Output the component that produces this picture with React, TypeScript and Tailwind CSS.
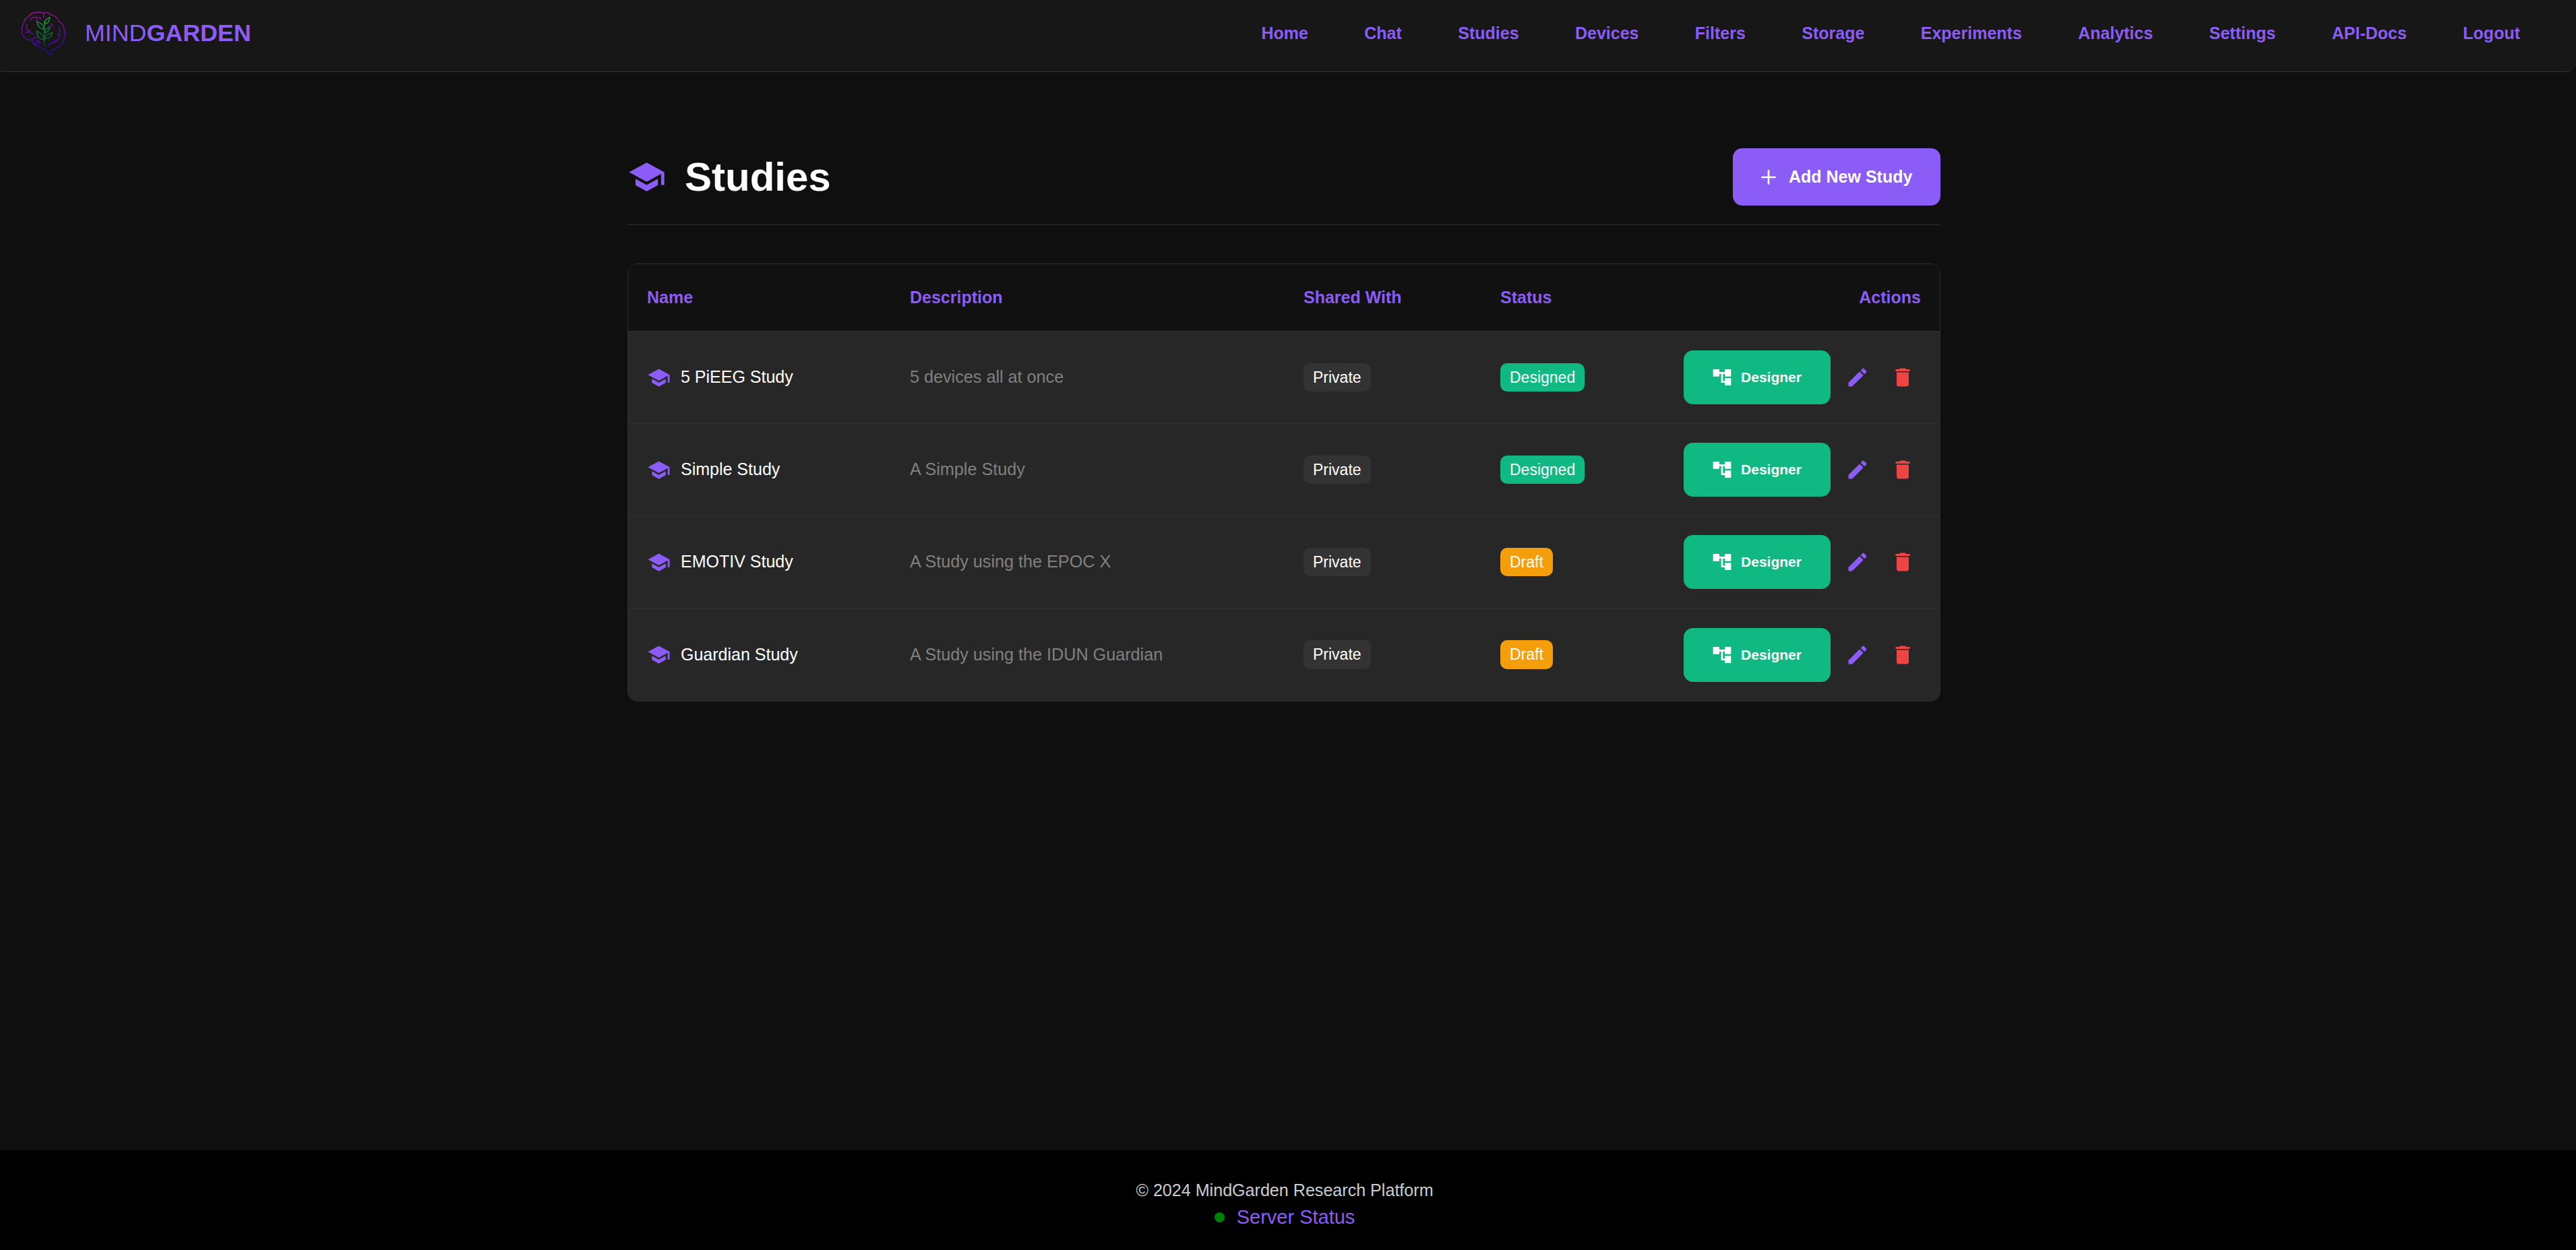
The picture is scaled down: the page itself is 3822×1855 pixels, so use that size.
const F = "font-['Liberation_Sans',Arial,sans-serif]";

const Cap = ({ className }: { className: string }) => (
  <svg viewBox="0 0 24 24" fill="currentColor" className={className}>
    <path d="M5 13.18v4L12 21l7-3.82v-4L12 17l-7-3.82zM12 3 1 9l11 6 9-4.91V17h2V9L12 3z" />
  </svg>
);

const Pencil = () => (
  <svg viewBox="0 0 24 24" fill="currentColor" className="w-[36px] h-[36px] text-[#8b5cf6]">
    <path d="M3 17.25V21h3.75L17.81 9.94l-3.75-3.75L3 17.25zM20.71 7.04a.996.996 0 0 0 0-1.41l-2.34-2.34a.996.996 0 0 0-1.41 0l-1.83 1.83 3.75 3.75 1.83-1.83z" />
  </svg>
);

const Trash = () => (
  <svg viewBox="0 0 24 24" fill="currentColor" className="w-[36px] h-[36px] text-[#ef4444]">
    <path d="M6 19c0 1.1.9 2 2 2h8c1.1 0 2-.9 2-2V7H6v12zM19 4h-3.5l-1-1h-5l-1 1H5v2h14V4z" />
  </svg>
);

const Tree = () => (
  <svg viewBox="0 0 24 24" fill="currentColor" className="w-[32px] h-[32px] text-white">
    <path d="M22 11V3h-7v3H9V3H2v8h7V8h2v10h4v3h7v-8h-7v3h-2V8h2v3z" />
  </svg>
);

const Logo = () => (
  <svg viewBox="60 30 205 210" fill="none" className="w-[68px] h-[70px] shrink-0">
    <defs>
      <linearGradient id="br" gradientUnits="userSpaceOnUse" x1="160" y1="40" x2="160" y2="232">
        <stop offset="0" stopColor="#a3109a" />
        <stop offset="1" stopColor="#2506b8" />
      </linearGradient>
      <linearGradient id="lf" gradientUnits="userSpaceOnUse" x1="170" y1="62" x2="170" y2="190">
        <stop offset="0" stopColor="#10b030" />
        <stop offset="1" stopColor="#064a38" />
      </linearGradient>
    </defs>
    <g stroke="url(#br)" strokeWidth="4" strokeLinecap="round" strokeLinejoin="round">
      <path d="M165 44C155 38 140 38 130 41C118 40 104 46 100 56C86 62 78 72 76 88C68 98 66 114 69 126C66 136 72 148 84 154C90 162 102 164 114 164C114 178 124 188 140 190C150 198 160 202 168 204L196 232L203 206C216 206 230 198 238 186C250 180 258 166 256 152C264 140 262 122 254 110C254 96 244 84 232 80C228 66 214 52 198 50C188 40 174 38 165 44Z" />
      <path d="M165 44V62" />
      <path d="M105 76C108 64 122 58 134 64C142 60 150 64 152 70" />
      <path d="M135 72C132 78 134 84 138 88" />
      <path d="M92 95C84 104 86 118 106 132" />
      <path d="M84 130C92 130 100 126 106 120M106 132L118 136" />
      <path d="M114 164C118 152 132 148 142 152M128 168C136 164 146 168 150 176M122 182C130 178 140 176 146 178" />
      <path d="M234 110C240 120 240 130 226 144M240 140C238 152 232 162 218 166M218 166C212 174 196 176 184 190M206 176L226 168" />
      <path d="M196 90L198 92M192 100C198 102 202 100 206 96" />
    </g>
    <g stroke="url(#lf)" strokeWidth="4" strokeLinejoin="round">
      <path d="M168 190V78" />
      <path d="M166 116C164 96 152 86 136 82C136 100 148 114 166 116Z" />
      <path d="M168 92C168 76 178 68 192 62C192 78 184 90 168 92Z" />
      <path d="M170 130C172 116 180 108 192 106C190 120 184 128 170 130Z" />
      <path d="M166 162C164 142 150 128 134 124C134 146 146 160 166 162Z" />
      <path d="M170 158C172 142 186 134 204 130C200 148 188 158 170 158Z" />
    </g>
  </svg>
);

const nav = ["Home", "Chat", "Studies", "Devices", "Filters", "Storage", "Experiments", "Analytics", "Settings", "API-Docs", "Logout"];

const rows = [
  { name: "5 PiEEG Study", desc: "5 devices all at once", status: "Designed" },
  { name: "Simple Study", desc: "A Simple Study", status: "Designed" },
  { name: "EMOTIV Study", desc: "A Study using the EPOC X", status: "Draft" },
  { name: "Guardian Study", desc: "A Study using the IDUN Guardian", status: "Draft" },
];

const grid = "grid grid-cols-[390px_584px_292px_1fr] items-center";

export default function App() {
  return (
    <div className={`${F} min-h-[1855px] flex flex-col bg-[#0f0f0f] text-white`}>
      <header className="h-[107px] shrink-0 flex items-center justify-between bg-[#171717] border-b border-[#333333] rounded-bl-[4px] rounded-br-[15px] pl-[30px] pr-[83px] pb-[7px]">
        <div className="flex items-center gap-[28px]">
          <Logo />
          <div className="text-[35.8px] text-[#8b5cf6]">
            MIND<span className="font-bold">GARDEN</span>
          </div>
        </div>
        <nav className="flex items-center gap-[83.4px]">
          {nav.map((n) => (
            <a key={n} className="text-[25px] font-bold text-[#8b5cf6]">{n}</a>
          ))}
        </nav>
      </header>

      <main className="flex-1 w-[1948px] ml-[931px]">
        <div className="h-[227px] pt-[113px] border-b border-[#2f2f2f] flex items-start justify-between">
          <div className="flex items-center gap-[28px] h-[85px]">
            <Cap className="w-[57px] h-[57px] text-[#8b5cf6]" />
            <h1 className="text-[60px] font-bold">Studies</h1>
          </div>
          <button className="w-[308px] h-[85px] rounded-[14px] bg-[#8b5cf6] flex items-center pl-[37px] gap-[14px] text-[25px] font-bold text-white">
            <svg viewBox="0 0 24 24" fill="none" stroke="currentColor" strokeWidth="2" className="w-[32px] h-[32px]">
              <path d="M12 4v16M4 12h16" />
            </svg>
            Add New Study
          </button>
        </div>

        <div className="mt-[57px] border border-[#2f2f2f] rounded-[14px] overflow-hidden">
          <div className={`${grid} h-[100px] bg-[#111111] border-b border-[#333333] px-[28px] text-[25px] font-bold text-[#8b5cf6]`}>
            <div>Name</div>
            <div>Description</div>
            <div>Shared With</div>
            <div className="flex justify-between"><span>Status</span><span>Actions</span></div>
          </div>
          {rows.map((r) => (
            <div key={r.name} className={`${grid} h-[137px] bg-[#272727] border-b border-[#333333] last:border-b-0 px-[28px]`}>
              <div className="flex items-center gap-[15px] text-[25px] text-white">
                <Cap className="w-[35px] h-[35px] text-[#8b5cf6]" />
                {r.name}
              </div>
              <div className="text-[25.2px] text-[#808080]">{r.desc}</div>
              <div>
                <span className="inline-block px-[14px] py-[4px] rounded-[10px] bg-[#333333] text-[23px] text-white">Private</span>
              </div>
              <div className="flex items-center justify-between">
                <span className={`px-[14px] py-[4px] rounded-[10px] text-[23px] text-white ${r.status === "Designed" ? "bg-[#10b981]" : "bg-[#f59e0b]"}`}>{r.status}</span>
                <div className="flex items-center">
                  <button className="w-[218px] h-[80px] rounded-[14px] bg-[#10b981] flex items-center justify-center gap-[12px] pr-[2px] text-[21px] font-bold text-white">
                    <Tree />
                    Designer
                  </button>
                  <div className="ml-[22px] flex items-center gap-[31px] mr-[9px]">
                    <Pencil />
                    <Trash />
                  </div>
                </div>
              </div>
            </div>
          ))}
        </div>
      </main>

      <footer className="h-[148px] shrink-0 bg-black flex flex-col items-center pt-[41px] pr-[10px]">
        <div className="text-[25.1px] text-[#cccccc]">© 2024 MindGarden Research Platform</div>
        <div className="flex items-center gap-[18px] -mt-[1px]">
          <span className="w-[15px] h-[15px] rounded-full bg-[#008000]" />
          <a className="text-[29px] text-[#8b5cf6]">Server Status</a>
        </div>
      </footer>
    </div>
  );
}
